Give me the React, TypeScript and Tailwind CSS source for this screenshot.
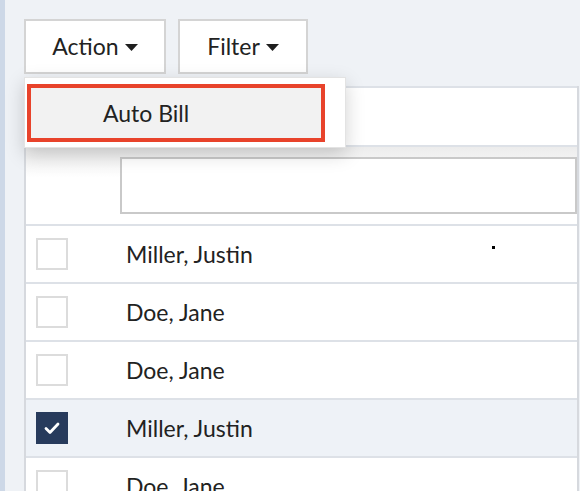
import React from "react";

const rows = [
  { name: "Miller, Justin", checked: false },
  { name: "Doe, Jane", checked: false },
  { name: "Doe, Jane", checked: false },
  { name: "Miller, Justin", checked: true },
  { name: "Doe, Jane", checked: false },
];

function Caret() {
  return (
    <svg width="13" height="8" viewBox="0 0 13 8" className="ml-[6px] mt-[2px]">
      <path d="M0 0 L13 0 L6.5 7 Z" fill="#1f1f1f" />
    </svg>
  );
}

function Checkbox({ checked }: { checked: boolean }) {
  if (checked) {
    return (
      <div className="w-[32px] h-[32px] bg-[#273b5c] flex items-center justify-center">
        <svg width="16" height="13" viewBox="0 0 16 13">
          <path d="M2 6.5 L6 10.5 L14 2" stroke="#fff" strokeWidth="2.8" fill="none" strokeLinecap="round" strokeLinejoin="round" />
        </svg>
      </div>
    );
  }
  return <div className="w-[32px] h-[32px] border-2 border-[#dcdcdc] bg-white" />;
}

export default function App() {
  return (
    <div
      className="w-[580px] h-[491px] overflow-hidden flex bg-[#eff2f6] text-[#222]"
      style={{ fontFamily: "Lato, 'Noto Sans', sans-serif" }}
    >
      <div className="w-[5px] bg-[#cdd8e7] shrink-0" />
      <div className="flex-1 pl-[19px] relative">
        <div className="flex gap-[12px] pt-[19px] pb-[12px]">
          <button className="w-[142px] h-[55px] bg-white border-2 border-[#d4d4d4] flex items-center justify-center text-[23px] leading-none">
            Action
            <Caret />
          </button>
          <button className="w-[130px] h-[55px] bg-white border-2 border-[#d4d4d4] flex items-center justify-center text-[23px] leading-none">
            Filter
            <Caret />
          </button>
        </div>

        <div className="bg-white border-l-2 border-r-2 border-[#d6d9de] mr-[1px]">
          <div className="h-[59px] border-t-2 border-[#dde1e7]" />
          <div className="h-[79px] border-t-2 border-[#dde1e7] flex items-center pl-[94px] bg-gradient-to-b from-[#ececec] to-white to-[40%]">
            <div className="flex-1 h-[57px] border-2 border-[#c9c9c9] bg-white" />
          </div>
          {rows.map((r, i) => (
            <div
              key={i}
              className={
                "h-[58px] border-t-2 border-[#dde1e7] flex items-center pl-[10px] " +
                (r.checked ? "bg-[#eef2f7]" : "bg-white")
              }
            >
              <Checkbox checked={r.checked} />
              <span className="ml-[58px] text-[23px] leading-none">{r.name}</span>
            </div>
          ))}
        </div>

        <div className="absolute left-[487px] top-[246px] w-[3px] h-[3px] bg-black" />

        <div className="absolute left-[19px] top-[77px] w-[322px] h-[71px] bg-white shadow-[0_6px_18px_rgba(0,0,0,0.18)] border border-[#e3e3e3] pt-[6px] pl-[2px]">
          <div className="w-[298px] h-[58px] border-[4px] border-[#e8432b] bg-[#f2f2f2] flex items-center pl-[72px] text-[23px] leading-none">
            Auto Bill
          </div>
        </div>
      </div>
    </div>
  );
}
